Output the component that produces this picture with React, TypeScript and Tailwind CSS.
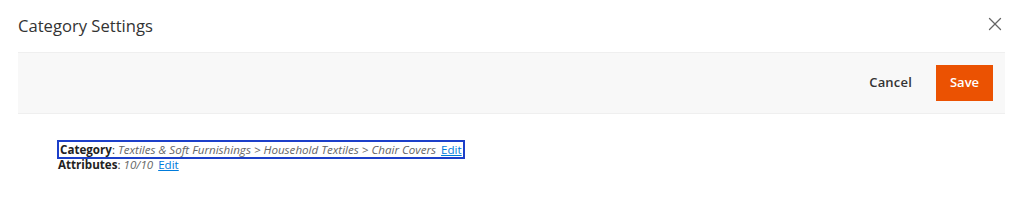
import { X } from 'lucide-react';

export default function App() {
  return (
    <div className="w-[1024px] h-[214px] bg-white text-[#333] font-['Open_Sans',sans-serif]">
      <div className="flex items-start justify-between pl-[18px] pr-[18px] pt-[14px] h-[52px]">
        <h1 className="text-[16.6px] leading-[24px] text-[#333]">Category Settings</h1>
        <button className="mt-[-1px] text-[#666]">
          <X className="w-[22px] h-[22px]" strokeWidth={1.4} />
        </button>
      </div>

      <div className="ml-[18px] mr-[19px] h-[62px] bg-[#f8f8f8] border-y border-[#efefef] flex items-center justify-end pr-[12px] gap-[24px]">
        <button className="text-[13px] font-semibold text-[#333] tracking-[0.2px]">Cancel</button>
        <button className="h-[36px] w-[57px] bg-[#eb5202] text-white text-[13px] font-semibold">Save</button>
      </div>

      <div className="pl-[57px] pt-[26px] text-[11.6px] leading-[13px]">
        <div className="inline-flex items-center h-[19px] border-2 border-[#1c3fc9] pl-[1px] pr-[1px]">
          <span className="font-bold text-[#222]">Category</span>
          <span>:&nbsp;</span>
          <span className="italic text-[#666]">Textiles &amp; Soft Furnishings &gt; Household Textiles &gt; Chair Covers</span>
          <a className="ml-[5px] text-[#007bdb] underline">Edit</a>
        </div>
        <div className="pl-[1px] mt-[-1px]">
          <span className="font-bold text-[#222]">Attributes</span>
          <span>:&nbsp;</span>
          <span className="italic text-[#666]">10/10</span>
          <a className="ml-[5px] text-[#007bdb] underline">Edit</a>
        </div>
      </div>
    </div>
  );
}
